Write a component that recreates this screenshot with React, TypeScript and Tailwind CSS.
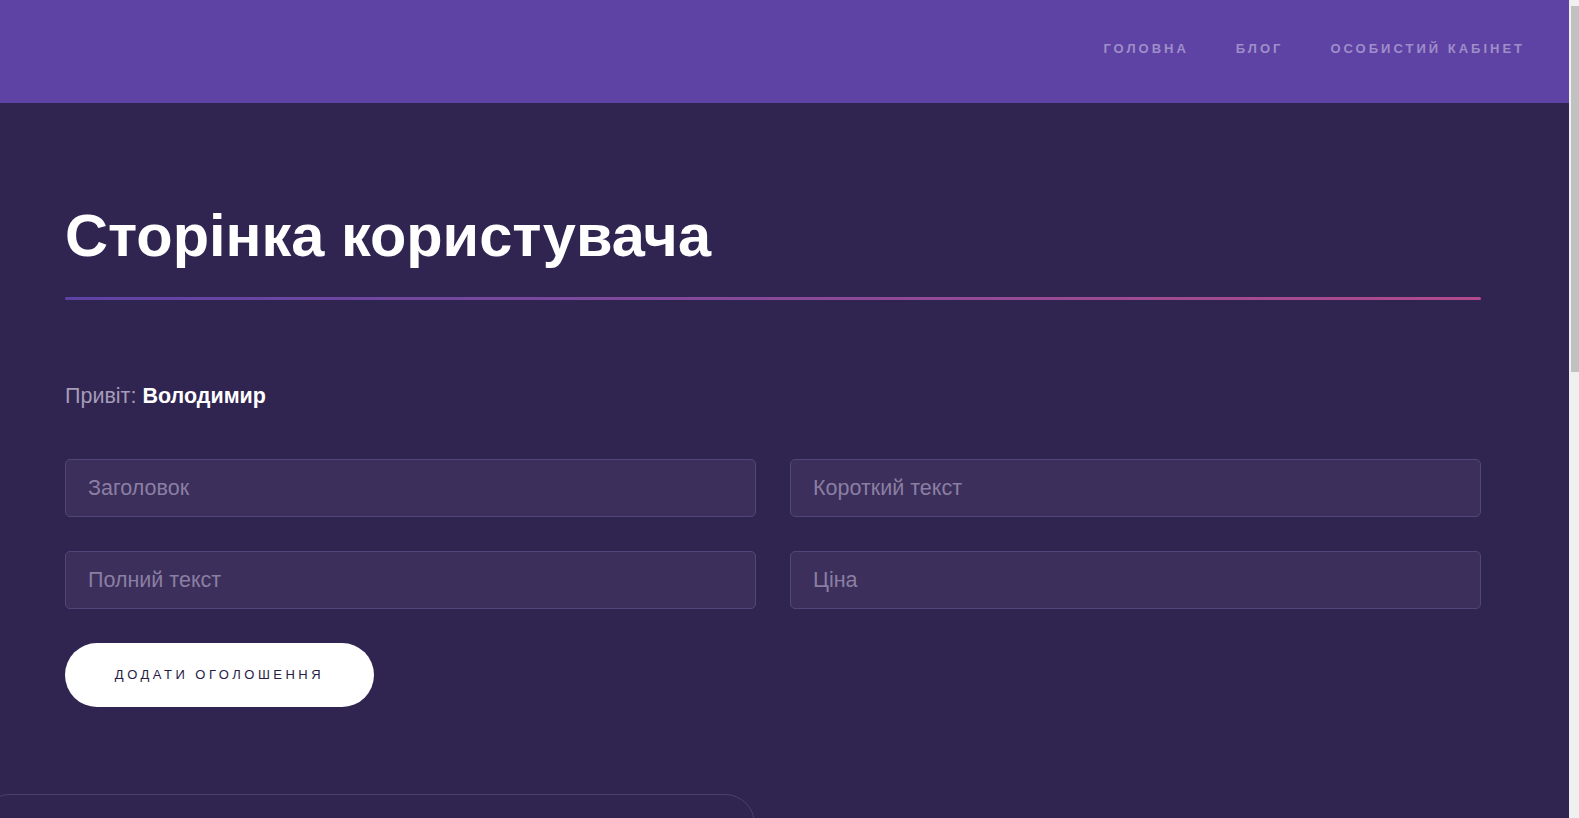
import React from 'react';

const fields = ['Заголовок', 'Короткий текст', 'Полний текст', 'Ціна'];

export default function App() {
  return (
    <div className="flex bg-[#302451] font-['Liberation_Sans',Arial,sans-serif] overflow-hidden">
      <div className="flex-1 min-h-[1750px] min-w-0">
        <header className="h-[103px] bg-[#5e43a5] flex items-center justify-end pr-[44px] pb-[6px]">
          <nav className="flex items-center gap-[47px] text-[13px] font-bold tracking-[3px] text-[#9e8ec9]">
            <a href="#">ГОЛОВНА</a>
            <a href="#">БЛОГ</a>
            <a href="#">ОСОБИСТИЙ КАБІНЕТ</a>
          </nav>
        </header>

        <main className="pl-[65px] pt-[97px] w-[1481px]">
          <h1 className="text-[59.5px] leading-[72px] font-bold text-white">Сторінка користувача</h1>
          <div className="mt-[25px] h-[3px] rounded-full bg-gradient-to-r from-[#5e43a5] to-[#b14a8c]" />

          <p className="mt-[82px] text-[21.5px] leading-[28px] text-[#a59cb8]">
            Привіт: <span className="font-bold text-white">Володимир</span>
          </p>

          <form className="mt-[49px] grid grid-cols-2 gap-x-[34px] gap-y-[34px]">
            {fields.map((f) => (
              <input
                key={f}
                placeholder={f}
                className="h-[58px] rounded-[5px] border border-[#51467a] bg-[#3c2f5b] px-[22px] text-[21.5px] text-white placeholder:text-[#8a7fa3] outline-none"
              />
            ))}
          </form>

          <button className="mt-[34px] h-[64px] w-[309px] rounded-full bg-white text-[13px] tracking-[3.5px] text-[#261c45]">
            ДОДАТИ ОГОЛОШЕННЯ
          </button>
        </main>

        <section className="mt-[87px]">
          <div className="-ml-[20px] w-[775px] h-[420px] rounded-[30px] border border-[#4b3f70] pt-[27px] pl-[248px]">
            <h2 className="text-[22px] font-bold text-white">МОЇ ОГОЛОШЕННЯ</h2>
          </div>
        </section>
      </div>

      <aside className="w-[10px] shrink-0 bg-[#f0f0f0]">
        <div className="ml-[2px] mt-[6px] h-[366px] w-[8px] bg-[#c1c1c1]" />
      </aside>
    </div>
  );
}
